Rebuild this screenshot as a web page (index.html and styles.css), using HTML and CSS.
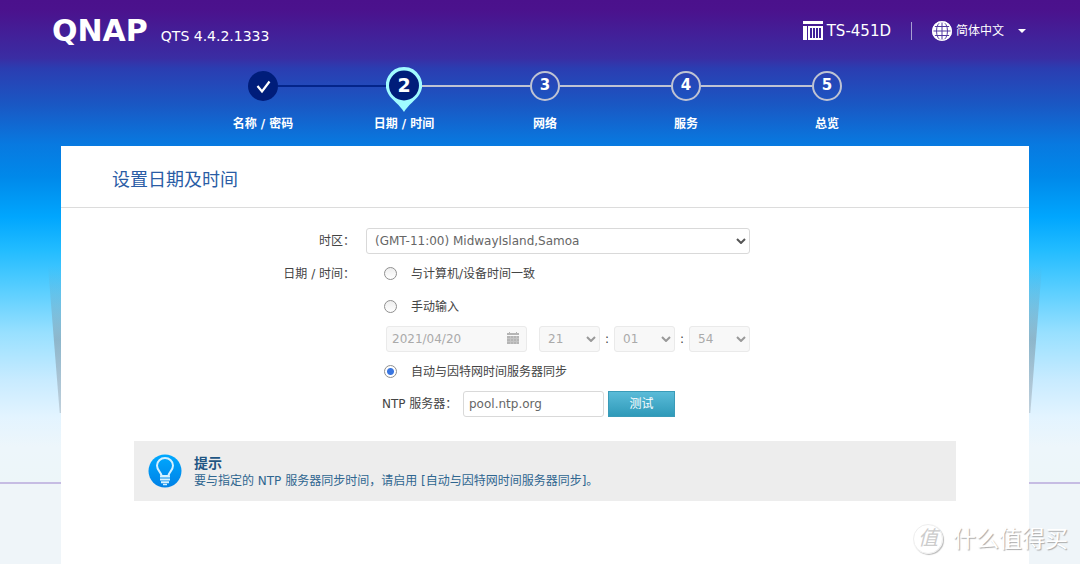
FILE: index.html
```html
<!DOCTYPE html>
<html lang="zh-CN">
<head>
<meta charset="utf-8">
<meta name="viewport" content="width=device-width, initial-scale=1">
<title>QTS 设置</title>
<link rel="stylesheet" href="styles.css">
</head>
<body>
<header class="topbar">
  <div class="brand">
    <span class="brand-name">QNAP</span>
    <span class="brand-version">QTS 4.4.2.1333</span>
  </div>
  <div class="device">
    <svg class="device-icon" width="20" height="20" viewBox="0 0 20 20" aria-hidden="true">
      <path fill="#fff" d="M0 0h20v3H0zM0 5h4v14H0zM5 5h15v14H5z"/>
      <path fill="#3f219a" d="M7 7h2v10H7zM10 7h2v10h-2zM13 7h2v10h-2zM16 7h2v10h-2z"/>
    </svg>
    <span class="device-name">TS-451D</span>
    <span class="divider"></span>
    <button class="language" type="button">
      <svg width="20" height="20" viewBox="0 0 20 20" aria-hidden="true">
        <circle cx="10" cy="10" r="10" fill="#fff"/>
        <g fill="none" stroke="#5138a0" stroke-width="1">
          <path d="M10 0v20M0 10h20M2 5.500h16M2 14.500h16"/>
          <ellipse cx="10" cy="10" rx="5.500" ry="9.500"/>
        </g>
        <circle cx="10" cy="10" r="9.300" fill="none" stroke="#fff" stroke-width="1.400"/>
      </svg>
      <span>简体中文</span>
      <svg class="caret" width="8" height="4" viewBox="0 0 8 4" aria-hidden="true"><path fill="#fff" d="M0 0h8L4 4z"/></svg>
    </button>
  </div>
</header>

<ol class="steps">
  <li class="step done">
    <div class="step-head">
      <span class="marker"><svg width="30" height="30" viewBox="0 0 30 30" aria-hidden="true"><path d="M9.500 15l4.500 5.500 7.500-10" fill="none" stroke="#fff" stroke-width="2.200"/></svg></span>
    </div>
    <span class="step-label">名称 / 密码</span>
  </li>
  <li class="step current">
    <div class="step-head">
      <span class="pin">
        <svg width="36" height="46" viewBox="0 0 36 46" aria-hidden="true">
          <path fill="#a0fbff" d="M18 0a18 18 0 0 1 15.500 27.200C30 33 22 38 18 45 14 38 6 33 2.500 27.200A18 18 0 0 1 18 0z"/>
          <circle cx="18" cy="18.500" r="15" fill="#001d7a"/>
        </svg>
        <span class="pin-number">2</span>
      </span>
    </div>
    <span class="step-label">日期 / 时间</span>
  </li>
  <li class="step">
    <div class="step-head"><span class="marker">3</span></div>
    <span class="step-label">网络</span>
  </li>
  <li class="step">
    <div class="step-head"><span class="marker">4</span></div>
    <span class="step-label">服务</span>
  </li>
  <li class="step">
    <div class="step-head"><span class="marker">5</span></div>
    <span class="step-label">总览</span>
  </li>
</ol>

<main class="card">
  <h1 class="card-title">设置日期及时间</h1>
  <form class="form">
    <label class="form-label" for="zone">时区：</label>
    <div class="select-box zone">
      <select id="zone"><option>(GMT-11:00) MidwayIsland,Samoa</option></select>
      <svg class="chevron" width="10" height="6" viewBox="0 0 10 6" aria-hidden="true"><path d="M1 1l4 4 4-4"/></svg>
    </div>

    <span class="form-label">日期 / 时间：</span>
    <div class="choice">
      <input type="radio" name="mode" id="mode-device">
      <label for="mode-device">与计算机/设备时间一致</label>
    </div>
    <div class="choice">
      <input type="radio" name="mode" id="mode-manual">
      <label for="mode-manual">手动输入</label>
    </div>
    <div class="datetime">
      <div class="date-box">
        <input class="text-input" type="text" value="2021/04/20" aria-label="日期" disabled>
        <svg class="calendar" width="12" height="12" viewBox="0 0 12 12" aria-hidden="true">
          <path fill="#b5b5b5" d="M0 1h2V0h1v1h6V0h1v1h2v2H0zM0 4h12v8H0z"/>
          <path stroke="#c4c4c4" stroke-width="1" fill="none" d="M0 6.500h12M0 9.500h12M3.500 4v8M6.500 4v8M9.500 4v8"/>
        </svg>
      </div>
      <div class="time">
        <div class="select-box">
          <select aria-label="时" disabled><option>21</option></select>
          <svg class="chevron" width="10" height="6" viewBox="0 0 10 6" aria-hidden="true"><path d="M1 1l4 4 4-4"/></svg>
        </div>
        <span class="colon">:</span>
        <div class="select-box">
          <select aria-label="分" disabled><option>01</option></select>
          <svg class="chevron" width="10" height="6" viewBox="0 0 10 6" aria-hidden="true"><path d="M1 1l4 4 4-4"/></svg>
        </div>
        <span class="colon">:</span>
        <div class="select-box">
          <select aria-label="秒" disabled><option>54</option></select>
          <svg class="chevron" width="10" height="6" viewBox="0 0 10 6" aria-hidden="true"><path d="M1 1l4 4 4-4"/></svg>
        </div>
      </div>
    </div>
    <div class="choice">
      <input type="radio" name="mode" id="mode-ntp" checked>
      <label for="mode-ntp">自动与因特网时间服务器同步</label>
    </div>
    <div class="ntp">
      <label class="ntp-label" for="server">NTP 服务器：</label>
      <input class="text-input server" type="text" id="server" value="pool.ntp.org">
      <button class="test" type="button">测试</button>
    </div>
  </form>

  <aside class="tip">
    <svg class="tip-icon" width="34" height="34" viewBox="0 0 34 34" aria-hidden="true">
      <defs><linearGradient id="bulb" x1="0" y1="0" x2="0" y2="1"><stop offset="0" stop-color="#00a9ff"/><stop offset="1" stop-color="#0081e6"/></linearGradient></defs>
      <circle cx="17" cy="17" r="16.500" fill="url(#bulb)"/>
      <path d="M13.500 22c0-4-4.500-5-4.500-10.500a8 7.500 0 0 1 16 0C25 17 20.500 18 20.500 22z" fill="none" stroke="#d5f1ff" stroke-width="2"/>
      <path d="M12 22.500h10M12 25.500h10M13 28.200h8" stroke="#d5f1ff" stroke-width="2"/>
      <path d="M15 30.500h4" stroke="#d5f1ff" stroke-width="1.500"/>
    </svg>
    <div class="tip-body">
      <h2 class="tip-title">提示</h2>
      <p class="tip-text">要与指定的 NTP 服务器同步时间，请启用 [自动与因特网时间服务器同步]。</p>
    </div>
  </aside>
</main>

<div class="watermark">
  <span class="watermark-badge">值</span>
  <span>什么值得买</span>
</div>
</body>
</html>
```

FILE: styles.css
```css
* {
  box-sizing: border-box;
}

body {
  margin: 0;
  min-height: 100vh;
  display: flex;
  flex-direction: column;
  position: relative;
  font-family: "DejaVu Sans", "Noto Sans CJK SC", sans-serif;
  font-size: 12px;
  line-height: 16px;
  color: #444;
  background: linear-gradient(#4b118c 0, #4b128d 10px, #3a2da3 58px, #2b3db1 68px, #1a57c3 104px, #0879e0 144px, #0089ea 177px, #00a6fe 217px, #22bcff 250px, #55cdff 287px, #98e0ff 333px, #c8ebff 380px, #e3f4ff 417px, #edf6fb 447px, #edf6f9 482px, #c6bce3 482px, #c6bce3 484px, #eff5f9 484px) no-repeat #eff5f9;
}

select,
input,
button {
  font: inherit;
  margin: 0;
}

.topbar {
  display: flex;
  align-items: center;
  justify-content: space-between;
  height: 62px;
  padding: 0 54px 0 52px;
  color: #fff;
}

.brand {
  display: flex;
  align-items: baseline;
  gap: 13px;
}

.brand-name {
  font-size: 30px;
  font-weight: bold;
  line-height: 32px;
}

.brand-version {
  font-size: 14px;
}

.device {
  display: flex;
  align-items: center;
}

.device-name {
  margin-left: 4px;
  font-size: 15px;
}

.divider {
  width: 1px;
  height: 18px;
  margin: 0 20px;
  background: #a79fd2;
}

.language {
  display: flex;
  align-items: center;
  gap: 4px;
  padding: 0;
  border: 0;
  background: none;
  color: #fff;
}

.caret {
  margin-left: 10px;
}

.steps {
  display: grid;
  grid-template-columns: repeat(5, 141px);
  justify-content: center;
  margin: 0;
  padding: 5px 0 14px 10px;
  list-style: none;
  color: #fff;
  font-weight: bold;
}

.step {
  text-align: center;
}

.step-head {
  display: flex;
  height: 49px;
}

.step-head::before,
.step-head::after {
  content: "";
  flex: 1;
  height: 2px;
  margin-top: 18px;
  background: #bfc3d3;
}

.step:first-child .step-head::before,
.step:last-child .step-head::after {
  visibility: hidden;
}

.done .step-head::after,
.current .step-head::before {
  background: #04258a;
}

.marker {
  width: 30px;
  height: 30px;
  margin-top: 4px;
  border: 2px solid #bfc3d3;
  border-radius: 50%;
  font-size: 15px;
  line-height: 25px;
}

.done .marker {
  border: 0;
  background: #001d7a;
}

.pin {
  display: grid;
  width: 36px;
}

.pin svg,
.pin-number {
  grid-area: 1 / 1;
}

.pin-number {
  font-size: 19px;
  line-height: 37px;
}

.step-label {
  display: block;
}

.card {
  flex: 1;
  position: relative;
  margin: 0 51px 0 61px;
  padding-bottom: 64px;
  background: #fff;
}

.card::before,
.card::after {
  content: "";
  position: absolute;
  top: 120px;
  width: 13px;
  height: 147px;
  background: linear-gradient(rgba(120, 130, 140, 0), rgba(120, 130, 140, 0.45) 50%, rgba(120, 130, 140, 0.3));
}

.card::before {
  right: 100%;
  clip-path: polygon(0 0, 100% 0, 100% 100%, 90% 100%);
}

.card::after {
  left: 100%;
  clip-path: polygon(0 0, 100% 0, 10% 100%, 0 100%);
}

.card-title {
  margin: 0;
  padding: 22px 51px 15px;
  border-bottom: 1px solid #dcdcdc;
  font-size: 18px;
  font-weight: normal;
  line-height: 24px;
  color: #2a5ca5;
}

.form {
  display: grid;
  grid-template-columns: 294px 384px;
  column-gap: 11px;
  row-gap: 6px;
  align-items: center;
  padding: 20px 0 24px;
}

.form > * {
  grid-column: 2;
}

.form > .form-label {
  grid-column: 1;
  text-align: right;
}

.select-box,
.date-box {
  position: relative;
}

.select-box select,
.text-input {
  display: block;
  width: 100%;
  height: 26px;
  padding: 0 5px;
  border: 1px solid #d9d9d9;
  border-radius: 3px;
  background: #fff;
  color: #666;
  opacity: 1;
}

.select-box select {
  appearance: none;
  padding: 0 8px;
}

.select-box select:disabled,
.text-input:disabled {
  border-color: #eaeaea;
  background: #f8f8f8;
  color: #aaa;
}

.chevron {
  position: absolute;
  top: 10px;
  right: 4px;
  fill: none;
  stroke: #555;
  stroke-width: 2;
  pointer-events: none;
}

.datetime .chevron {
  stroke: #999;
}

.calendar {
  position: absolute;
  top: 6px;
  right: 8px;
}

.choice {
  display: flex;
  align-items: center;
  gap: 14px;
  height: 27px;
  padding-left: 18px;
}

.choice input {
  appearance: none;
  width: 13px;
  height: 13px;
  border: 1px solid #8f8f8f;
  border-radius: 50%;
  background: linear-gradient(#eee, #fff);
}

.choice input:checked {
  background: radial-gradient(circle, #3a76e0 0, #3a76e0 3px, #fff 4px);
}

.datetime {
  display: flex;
  justify-content: space-between;
  padding-left: 20px;
}

.date-box {
  width: 141px;
}

.time {
  display: flex;
  align-items: center;
}

.time .select-box {
  width: 61px;
}

.colon {
  width: 14px;
  text-align: center;
}

.ntp {
  display: flex;
  align-items: center;
  padding-left: 16px;
}

.ntp-label {
  width: 81px;
}

.server {
  width: 141px;
}

.test {
  width: 67px;
  height: 26px;
  margin-left: 4px;
  padding: 0;
  border: 1px solid #3a9bb8;
  background: linear-gradient(#5abbd8, #2f9ab9);
  color: #fff;
}

.tip {
  display: flex;
  align-items: center;
  gap: 12px;
  margin: 0 73px;
  padding: 12px 14px;
  background: #ededed;
  color: #2f6690;
}

.tip-icon {
  flex: none;
}

.tip-title {
  margin: 0;
  font-size: 14px;
  line-height: 20px;
  color: #1f5684;
}

.tip-text {
  margin: 0;
}

.watermark {
  position: absolute;
  right: 12px;
  bottom: 10px;
  display: flex;
  align-items: center;
  gap: 10px;
  color: #fff;
  font-size: 23px;
  line-height: 32px;
  text-shadow: 1px 1px 1px #aaa;
}

.watermark-badge {
  width: 30px;
  height: 30px;
  border: 1px solid #eee;
  border-radius: 50%;
  box-shadow: 1px 1px 1px #bbb;
  font-size: 20px;
  font-style: italic;
  line-height: 26px;
  text-align: center;
  text-shadow: none;
  color: #ccc;
}
```
